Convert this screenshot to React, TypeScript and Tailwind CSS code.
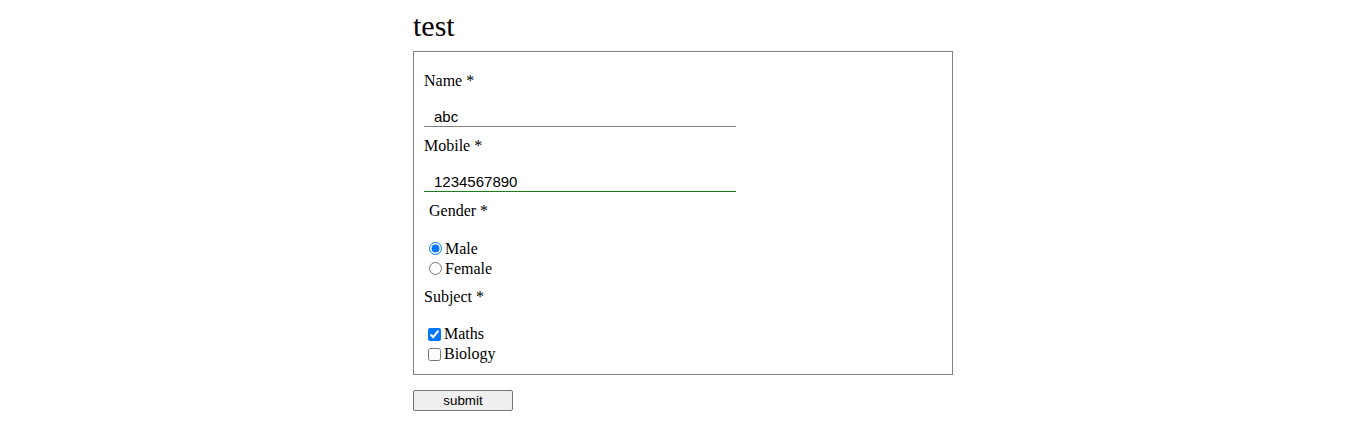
import React from 'react';

const serif = "font-['Liberation_Serif','Times_New_Roman',serif]";
const sans = "font-['Liberation_Sans',Arial,sans-serif]";

function TextField({ label, value, valid }: { label: string; value: string; valid?: boolean }) {
  return (
    <div>
      <label className={`block text-[16px] leading-[18px] ${serif}`}>{label} *</label>
      <input
        type="text"
        readOnly
        value={value}
        className={`block w-[312px] pl-[10px] pt-[18px] pb-px text-[15px] leading-[17px] text-black outline-none border-b ${sans} ${
          valid ? 'border-[#1b7d1b]' : 'border-[#808080]'
        }`}
      />
    </div>
  );
}

export default function App() {
  return (
    <div className="w-[540px] mx-auto pt-[8px] text-black">
      <h1 className={`text-[30px] leading-[35px] mb-[8px] ${serif}`}>test</h1>

      <form className="border border-[#808080] px-[10px] pt-[20px] pb-[10px]">
        <TextField label="Name" value="abc" />
        <div className="mt-[10px]">
          <TextField label="Mobile" value="1234567890" valid />
        </div>

        <div className={`mt-[10px] text-[16px] ${serif}`}>
          <div className="ml-[5px] leading-[18px]">Gender *</div>
          <div className="mt-[19px]">
            <label className="flex items-start leading-[20px]">
              <input type="radio" name="gender" defaultChecked className="mt-[3px] ml-[5px] mr-[3px]" />
              Male
            </label>
            <label className="flex items-start leading-[20px]">
              <input type="radio" name="gender" className="mt-[3px] ml-[5px] mr-[3px]" />
              Female
            </label>
          </div>

          <div className="mt-[9px] leading-[18px]">Subject *</div>
          <div className="mt-[18px]">
            <label className="flex items-start leading-[20px]">
              <input type="checkbox" defaultChecked className="mt-[4px] ml-[4px] mr-[3px]" />
              Maths
            </label>
            <label className="flex items-start leading-[20px]">
              <input type="checkbox" className="mt-[4px] ml-[4px] mr-[3px]" />
              Biology
            </label>
          </div>
        </div>
      </form>

      <button
        type="button"
        className={`mt-[15px] w-[100px] h-[21px] bg-[#efefef] border border-[#767676] rounded-[2px] text-[13.33px] leading-[15px] ${sans}`}
      >
        submit
      </button>
    </div>
  );
}
